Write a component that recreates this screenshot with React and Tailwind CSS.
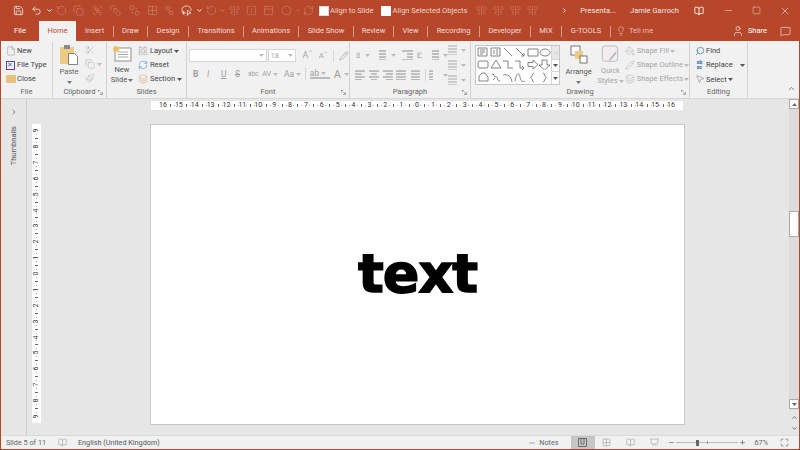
import {
  Save, Undo2, RotateCcw, Copy, Group, Ungroup, BringToFront, SendToBack, LassoSelect, ChevronDown,
  AlignCenterVertical, FlipHorizontal, Lightbulb, User, MessageSquare, Scissors, Paintbrush, File,
  Search, MousePointer2, PaintBucket, Pencil, Layers, ChevronRight, ChevronUp, Minus, Plus, X, Square,
  Maximize, BookOpen, LayoutGrid, PanelTop, Pentagon, RefreshCw, Grid2x2, Presentation,
} from "lucide-react";

const font = "font-['Roboto','Liberation_Sans',sans-serif]";

const tabs = [
  ["Insert", 37], ["Draw", 34], ["Design", 41], ["Transitions", 55], ["Animations", 55],
  ["Slide Show", 55], ["Review", 40], ["View", 34], ["Recording", 52], ["Developer", 51],
  ["MIX", 31], ["G-TOOLS", 49],
];

const shapes = [
  "M1 1h9v8H1z M3 3h5 M3 5h5 M3 7h3", "M1 1h9v8H1z M7 2v6 M3 4h2 M3 6h2", "M2 1l8 8", "M2 1l8 8 M10 6v3H7", "M1 2h10v7H1z", "M1 5.5a5 3.5 0 1 0 10 0a5 3.5 0 1 0-10 0",
  "M2 2h8l1 1v5l-1 1H2L1 8V3z", "M6 1l5 8H1z", "M1 2h5v7h5", "M1 2h5v7h3 M8 7l2 2-2 2", "M1 3.5h5V1l5 4.5-5 4.5V7.5H1z", "M3 1h5v5h3l-5.500 5L0 6h3z",
  "M2 9V4l3-3h3l3 4v4z", "M2 2c3 0 1 3 4 3s0 4 4 4 M3 8l2-2", "M1 3c5-1 8 1 9 7", "M1 9c2-9 4-9 5-4s3 5 5 4", "M7 1C5 1 5.500 5 3.500 5.500C5.500 6 5 10 7 10", "M4 1c2 0 1.500 4 3.500 4.500C5.500 6 6 10 4 10",
];

// three grey bars, used by every paragraph button
function Lines({ w = [10, 7, 10, 7], x = [0, 0, 0, 0], c = "#8c8c8c" }) {
  return (
    <svg width="11" height="10" viewBox="0 0 11 10">
      {w.map((len, i) => (
        <rect key={i} x={x[i]} y={i * 3 + 0.5} width={len} height="1" fill={c} />
      ))}
    </svg>
  );
}

function Caret({ c = "#777" }) {
  return (
    <svg width="5" height="3" viewBox="0 0 5 3" className="shrink-0">
      <path d="M0 0h5L2.500 3z" fill={c} />
    </svg>
  );
}

function Group_({ label, width, launcher, children }) {
  return (
    <div className={`flex h-full shrink-0 flex-col border-r border-[#d2d2d2] ${width}`}>
      <div className="flex h-[45px] min-h-0">{children}</div>
      <div className="relative flex h-[12px] items-center justify-center text-[7.500px] leading-none text-[#666]">
        {label}
        {launcher && (
          <svg width="5" height="5" viewBox="0 0 5 5" className="absolute right-[3px] top-[4px]">
            <path d="M0 .5h2M.5 0v2M4.500 2v2.500H2M2 2l2 2" stroke="#888" fill="none" strokeWidth=".7" />
          </svg>
        )}
      </div>
    </div>
  );
}

function Row({ icon, label, caret, muted, cls = "" }) {
  return (
    <div className={`flex h-[14.5px] items-center whitespace-nowrap text-[7.500px] leading-none ${muted ? "text-[#a6a6a6]" : "text-[#444]"} ${cls}`}>
      <span className="flex w-[11px] justify-center">{icon}</span>
      {label}
      {caret && <Caret c={muted ? "#bbb" : "#555"} />}
    </div>
  );
}

function Ruler({ vertical }) {
  const cells = [];
  const max = vertical ? 9 : 16;
  for (let n = -max; n <= max; n++) {
    const num = Math.abs(n);
    cells.push(
      <span key={n} className={`flex items-center justify-center overflow-visible whitespace-nowrap text-[7px] leading-none text-[#333] ${vertical ? "h-[3.975px] w-full" : "h-full w-[3.975px]"}`}>
        <span className={vertical ? "-rotate-90" : ""}>{num}</span>
      </span>
    );
    if (n === max) break;
    ["dot", "bar", "dot"].forEach((kind, i) => {
      cells.push(
        <span key={n + "-" + i} className={`flex items-center justify-center ${vertical ? "h-[3.975px] w-full" : "h-full w-[3.975px]"}`}>
          {kind === "dot" ? (
            <span className="h-[1px] w-[1px] bg-[#aaa]" />
          ) : (
            <span className={`bg-[#666] ${vertical ? "h-[1px] w-[3px]" : "h-[3px] w-[1px]"}`} />
          )}
        </span>
      );
    });
  }
  return (
    <div className={`flex items-center justify-center bg-white ${vertical ? "h-[299px] w-[9px] flex-col" : "h-[9px] w-[532px]"}`}>
      {cells}
    </div>
  );
}

export default function App() {
  const fade = "#cf7f67";
  const titleIcons = [
    [Save, 18, "#fff"], [Undo2, 18, "#fff"], [ChevronDown, 8, "#fff"], [RotateCcw, 16, fade], [Copy, 19, fade],
    [Group, 18, fade], [BringToFront, 19, fade], [SendToBack, 18, fade], [Grid2x2, 18, fade], [Ungroup, 17, fade],
    [LassoSelect, 17, "#fff"], [ChevronDown, 9, "#fff"], [RotateCcw, 14, fade], [ChevronDown, 8, fade],
    [AlignCenterVertical, 17, fade], [FlipHorizontal, 17, fade], [PanelTop, 17, fade], [Pentagon, 18, fade],
    [ChevronDown, 6, fade], [RefreshCw, 15, fade],
  ];

  return (
    <div className={`flex h-[450px] w-[800px] flex-col overflow-hidden border-x border-b border-[#b7472a] bg-[#e6e6e6] ${font}`}>
      {/* TITLE BAR */}
      <div className="flex h-[21px] shrink-0 items-center whitespace-nowrap bg-[#b7472a] pl-[8px] pr-[8px] text-[7.500px] text-white">
        {titleIcons.map(([Icon, w, color], i) => (
          <span key={i} className="flex shrink-0 justify-center" style={{ width: w }}>
            <Icon size={w < 10 ? 7 : 11} color={color} strokeWidth={w < 10 ? 3 : 1.500} />
          </span>
        ))}
        <span className="ml-[3px] h-[10px] w-[10px] shrink-0 border border-[#ddd] bg-white" />
        <span className="ml-[1px] text-[#f0d5cb]">Align to Slide</span>
        <span className="ml-[7px] h-[10px] w-[10px] shrink-0 bg-white" />
        <span className="ml-[2px] text-[#f0d5cb]">Align Selected Objects</span>
        <span className="ml-[9px] flex gap-[6px]">
          {[0, 1, 2, 3].map((i) => (
            <AlignCenterVertical key={i} size={11} color={fade} strokeWidth={1.500} />
          ))}
        </span>
        <span className="ml-auto flex items-center">
          <ChevronRight size={7} color="#fff" strokeWidth={3} />
          <span className="ml-[12px] text-[#f6e6e0]">Presenta...</span>
          <span className="ml-[14px] text-[#f6e6e0]">Jamie Garroch</span>
          <BookOpen size={10} color="#fff" className="ml-[15px]" />
          <Minus size={11} color="#fff" strokeWidth={1} className="ml-[19px]" />
          <Square size={9} color="#fff" strokeWidth={1} className="ml-[18px]" />
          <X size={12} color="#fff" strokeWidth={1} className="ml-[18px]" />
        </span>
      </div>

      {/* TABS */}
      <div className="flex h-[20px] shrink-0 items-center whitespace-nowrap bg-[#b7472a] pr-[8px] text-[7.500px] leading-none text-[#f3ddd5]">
        <span className="w-[38px] shrink-0 text-center text-white">File</span>
        <span className="flex h-full w-[37px] shrink-0 items-center justify-center bg-[#f1f1f1] text-[#c0492c]">Home</span>
        {tabs.map(([name, w], i) => (
          <span key={name} className={`flex h-[11px] shrink-0 items-center justify-center ${i === 0 ? "" : "border-l border-[#d99a86]"}`} style={{ width: w }}>
            {name}
          </span>
        ))}
        <span className="flex h-[11px] items-center gap-[3px] border-l border-[#d99a86] pl-[5px] text-[#e9bfb1]">
          <Lightbulb size={10} strokeWidth={1.200} color="#f3ddd5" />
          Tell me
        </span>
        <span className="ml-auto flex items-center gap-[4px] text-white">
          <User size={12} strokeWidth={1.200} />
          Share
        </span>
        <MessageSquare size={11} color="#fff" strokeWidth={1.200} className="ml-[13px]" />
      </div>

      {/* RIBBON */}
      <div className="flex h-[58px] shrink-0 border-b border-[#d6d6d6] bg-[#f1f1f1] pt-[1px]">
        <Group_ label="File" width="w-[52px]">
          <div className="flex flex-col pl-[4px] pt-[2px]">
            <Row icon={<File size={10} color="#777" strokeWidth={1} />} label="New" cls="gap-[1px]" />
            <Row icon={<span className="block h-[9px] w-[9px] border border-[#6b3fa0] text-[7px] leading-[7px] text-[#2b7cd3]">✕</span>} label="File Type" cls="gap-[1px]" />
            <Row icon={<span className="block h-[8px] w-[10px] rounded-[1px] bg-[#e8c27a]" />} label="Close" cls="gap-[1px]" />
          </div>
        </Group_>

        <Group_ label="Clipboard" width="w-[54px]" launcher>
          <div className="flex w-[32px] flex-col items-center pt-[3px] text-[7.500px] leading-none text-[#666]">
            <svg width="20" height="20" viewBox="0 0 20 20">
              <rect x="1" y="2" width="14" height="17" fill="#eecb85" />
              <rect x="5" y="0" width="6" height="4" fill="#8a8a8a" />
              <path d="M9.500 8.500h6l3 3v8h-9z" fill="#fff" stroke="#666" strokeWidth=".8" />
            </svg>
            <span className="mt-[3px]">Paste</span>
            <span className="mt-[5px]"><Caret /></span>
          </div>
          <div className="flex flex-col gap-[4px] pt-[3px]">
            <Scissors size={10} color="#aaa" strokeWidth={1.200} />
            <span className="flex items-center gap-[2px]"><Copy size={10} color="#aaa" strokeWidth={1.200} /><Caret c="#bbb" /></span>
            <Paintbrush size={10} color="#aaa" strokeWidth={1.200} />
          </div>
        </Group_>

        <Group_ label="Slides" width="w-[80px]">
          <div className="flex w-[30px] flex-col items-center pt-[3px] text-[7.500px] leading-[10px] text-[#555]">
            <svg width="20" height="17" viewBox="0 0 20 17">
              <rect x="3" y="3" width="16" height="13" fill="#fff" stroke="#777" strokeWidth=".8" />
              <path d="M6 7h10M6 9.500h10M6 12h10" stroke="#aaa" />
              <circle cx="4" cy="4" r="3" fill="#f0c060" />
            </svg>
            <span className="mt-[3px]">New</span>
            <span className="flex items-center gap-[1px]">Slide<Caret /></span>
          </div>
          <div className="flex flex-col pt-[2px]">
            <Row icon={<LayoutGrid size={10} color="#888" strokeWidth={1} />} label="Layout" caret cls="gap-[2px]" />
            <Row icon={<RefreshCw size={10} color="#2b7cd3" strokeWidth={1.200} />} label="Reset" cls="gap-[2px]" />
            <Row icon={<Layers size={10} color="#c98a3c" strokeWidth={1} />} label="Section" caret cls="gap-[2px]" />
          </div>
        </Group_>

        <Group_ label="Font" width="w-[163px]" launcher>
          <div className="flex w-full flex-col pl-[2px] pt-[7px]">
            <div className="flex h-[13px] items-center">
              <span className="flex h-[13px] w-[81px] items-center justify-end border border-[#d5d5d5] bg-white pr-[2px]"><Caret c="#bbb" /></span>
              <span className="ml-[1px] flex h-[13px] w-[29px] items-center justify-between border border-[#d5d5d5] bg-white px-[2px] text-[7.500px] text-[#a6a6a6]">18<Caret c="#bbb" /></span>
              <span className="ml-[7px] text-[9px] text-[#a6a6a6]">Aˆ</span>
              <span className="ml-[6px] text-[8px] text-[#a6a6a6]">Aˇ</span>
              <span className="ml-[6px] h-[12px] border-l border-[#d5d5d5]" />
              <Pencil size={10} color="#aaa" className="ml-[5px]" />
            </div>
            <div className="mt-[6px] flex items-center text-[8.500px] leading-none text-[#a0a0a0]">
              <span className="ml-[4px] w-[14px] font-bold">B</span>
              <span className="w-[14px] italic">I</span>
              <span className="w-[14px] underline">U</span>
              <span className="w-[13px] line-through">S</span>
              <span className="w-[14px] text-[6.500px]">abc</span>
              <span className="flex w-[22px] items-center gap-[2px] text-[7.500px]">AV<Caret c="#bbb" /></span>
              <span className="flex w-[21px] items-center gap-[2px]">Aa<Caret c="#bbb" /></span>
              <span className="h-[12px] border-l border-[#d5d5d5]" />
              <span className="ml-[4px] flex w-[20px] items-center gap-[2px] border-b-2 border-[#bbb] leading-[8px]">ab<Caret c="#bbb" /></span>
              <span className="ml-[4px] flex items-center gap-[3px] text-[11px]">A<Caret c="#bbb" /></span>
            </div>
          </div>
        </Group_>

        <Group_ label="Paragraph" width="w-[121px]" launcher>
          <div className="flex w-[98px] flex-col pl-[5px] pt-[7px]">
            <div className="flex h-[12px] items-center gap-[4px]">
              <Lines w={[7, 7, 7, 7]} x={[3, 3, 3, 3]} /><Caret c="#bbb" />
              <span className="ml-[2px]"><Lines w={[7, 7, 7, 7]} x={[3, 3, 3, 3]} /></span><Caret c="#bbb" />
              <span className="ml-[2px]"><Lines w={[11, 6, 6, 11]} x={[0, 5, 5, 0]} /></span>
              <Lines w={[11, 6, 6, 11]} x={[0, 0, 0, 0]} />
              <span className="ml-[2px]"><Lines w={[7, 7, 7, 7]} x={[4, 4, 4, 4]} /></span><Caret c="#bbb" />
            </div>
            <div className="mt-[8px] flex h-[12px] items-center gap-[3px]">
              <Lines w={[10, 7, 10, 7]} />
              <Lines w={[10, 6, 10, 6]} x={[0, 2, 0, 2]} />
              <Lines w={[10, 7, 10, 7]} x={[0, 3, 0, 3]} />
              <Lines w={[10, 10, 10, 10]} />
              <Lines w={[9, 9, 9, 9]} x={[1, 1, 1, 1]} />
              <span className="ml-[1px] h-[12px] border-l border-[#d5d5d5]" />
              <Lines w={[4, 4, 4, 4]} /><Caret c="#bbb" />
            </div>
          </div>
          <div className="flex flex-col gap-[5px] pt-[3px]">
            {[0, 1, 2].map((i) => (
              <span key={i} className="flex items-center gap-[2px]"><Lines w={[9, 9, 9, 9]} c="#aaa" /><Caret c="#bbb" /></span>
            ))}
          </div>
        </Group_>

        <Group_ label="Drawing" width="w-[219px]" launcher>
          <div className="ml-[4px] mt-[3px] flex h-[40px] w-[85px] border border-[#c6c6c6] bg-white">
            <div className="grid h-full w-[76px] grid-cols-6 grid-rows-3 place-items-center pl-[1px]">
              {shapes.map((d, i) => (
                <svg key={i} width="12" height="11" viewBox="0 0 12 11">
                  <path d={d} fill="none" stroke="#666" strokeWidth=".8" />
                </svg>
              ))}
            </div>
            <div className="flex w-[8px] flex-col border-l border-[#d5d5d5] text-center">
              <span className="flex h-[13px] items-center justify-center bg-[#e8e8e8]"><ChevronUp size={6} color="#aaa" /></span>
              <span className="flex h-[13px] items-center justify-center border-y border-[#d5d5d5]"><Caret c="#555" /></span>
              <span className="flex h-[12px] items-center justify-center"><Caret c="#555" /></span>
            </div>
          </div>
          <div className="flex w-[42px] flex-col items-center pt-[3px] text-[7.500px] leading-[10px] text-[#555]">
            <svg width="18" height="20" viewBox="0 0 18 20">
              <rect x="1" y="1" width="9" height="9" fill="#fff" stroke="#555" strokeWidth=".8" />
              <rect x="5" y="6" width="8" height="8" fill="#eecb85" />
              <rect x="10" y="11" width="7" height="7" fill="#fff" stroke="#555" strokeWidth=".8" />
            </svg>
            <span className="mt-[2px]">Arrange</span>
            <span className="mt-[4px]"><Caret /></span>
          </div>
          <div className="flex w-[30px] flex-col items-center pt-[3px] text-[7.500px] leading-[10px] text-[#a6a6a6]">
            <svg width="19" height="20" viewBox="0 0 19 20">
              <rect x="1" y="1" width="16" height="16" rx="3" fill="#f3edf1" stroke="#bbb" />
              <path d="M16 8l-6 7-2 2 1-3 6-7z" fill="#aaa" />
            </svg>
            <span className="mt-[2px]">Quick</span>
            <span className="flex items-center gap-[1px]">Styles<Caret c="#bbb" /></span>
          </div>
          <div className="flex flex-col pl-[1px] pt-[2px]">
            <Row icon={<PaintBucket size={10} color="#aaa" strokeWidth={1.200} />} label="Shape Fill" caret muted cls="gap-[1px]" />
            <Row icon={<Pencil size={10} color="#aaa" strokeWidth={1.200} />} label="Shape Outline" caret muted cls="gap-[1px]" />
            <Row icon={<Layers size={10} color="#aaa" strokeWidth={1.200} />} label="Shape Effects" caret muted cls="gap-[1px]" />
          </div>
        </Group_>

        <Group_ label="Editing" width="w-[58px]">
          <div className="flex flex-col pl-[4px] pt-[2px]">
            <Row icon={<Search size={10} color="#2b6cb0" strokeWidth={1.500} className="-scale-x-100" />} label="Find" cls="gap-[1px]" />
            <div className="flex items-center">
              <Row icon={<span className="text-[5px] font-bold leading-[5px] text-[#2b6cb0]">ab<br />ac</span>} label="Replace" cls="gap-[1px]" />
              <span className="ml-[7px]"><Caret c="#555" /></span>
            </div>
            <Row icon={<MousePointer2 size={10} color="#777" strokeWidth={1.200} />} label="Select" caret cls="gap-[1px]" />
          </div>
        </Group_>
        <div className="flex flex-1 items-end justify-end pb-[5px] pr-[3px]">
          <ChevronUp size={9} color="#555" strokeWidth={2} />
        </div>
      </div>

      {/* WORK AREA */}
      <div className="flex min-h-0 flex-1">
        <div className="flex w-[26px] shrink-0 flex-col items-center border-r border-[#cfcfcf] pt-[9px]">
          <ChevronRight size={8} color="#555" strokeWidth={2} />
          <span className="mt-[10px] rotate-180 text-[7.500px] leading-none text-[#555] [writing-mode:vertical-rl]">Thumbnails</span>
        </div>
        <div className="flex min-w-0 flex-1 flex-col pt-[2px]">
          <div className="ml-[124px]">
            <Ruler />
          </div>
          <div className="mt-[14px] flex">
            <div className="ml-[5px]">
              <Ruler vertical />
            </div>
            <div className="ml-[109px] flex h-[301px] w-[535px] items-center justify-center border border-[#c8c8c8] bg-white pb-[2px]">
              <span className="font-['DejaVu_Sans',sans-serif] text-[54px] leading-none font-bold tracking-[-1px] text-black [-webkit-text-stroke:1.500px_black]">text</span>
            </div>
          </div>
        </div>
        <div className="flex w-[10px] shrink-0 flex-col bg-[#dcdcdc]">
          <span className="flex h-[10px] items-center justify-center border border-[#aaa] bg-white"><span className="rotate-180"><Caret c="#666" /></span></span>
          <span className="mt-[102px] h-[26px] border border-[#aaa] bg-white" />
          <span className="mt-auto flex h-[10px] items-center justify-center border border-[#aaa] bg-white"><Caret c="#666" /></span>
          <span className="mt-[1px] flex h-[25px] flex-col items-center justify-center gap-[4px] bg-[#e6e6e6]">
            <ChevronUp size={7} color="#666" strokeWidth={3} />
            <ChevronDown size={7} color="#666" strokeWidth={3} />
          </span>
        </div>
      </div>

      {/* STATUS BAR */}
      <div className="flex h-[14px] shrink-0 items-center border-t border-[#dadada] bg-[#f1f1f1] pr-[10px] text-[7.250px] leading-none text-[#666]">
        <span className="ml-[5px] w-[52px]">Slide 5 of 11</span>
        <BookOpen size={9} color="#777" strokeWidth={1} />
        <span className="ml-[11px] text-[#555]">English (United Kingdom)</span>
        <span className="ml-auto flex items-center gap-[3px]"><Minus size={8} color="#777" />Notes</span>
        <span className="ml-[12px] flex h-full w-[24px] items-center justify-center bg-[#c6c6c6]">
          <svg width="9" height="9" viewBox="0 0 9 9"><path d="M.5.5h8v8h-8zM3 .5v5.500h3V.500" fill="none" stroke="#555" strokeWidth=".8" /></svg>
        </span>
        <span className="flex w-[24px] justify-center"><Grid2x2 size={9} color="#777" strokeWidth={1} /></span>
        <span className="flex w-[24px] justify-center"><BookOpen size={9} color="#777" strokeWidth={1} /></span>
        <span className="flex w-[24px] justify-center"><Presentation size={9} color="#777" strokeWidth={1} /></span>
        <Minus size={7} color="#555" strokeWidth={2} className="ml-[1px]" />
        <span className="relative ml-[1px] flex h-[1px] w-[62px] items-center bg-[#bbb]">
          <span className="absolute left-[20px] h-[6px] w-[3px] bg-[#666]" />
          <span className="absolute left-[31px] h-[3px] w-[1px] bg-[#999]" />
        </span>
        <Plus size={7} color="#555" strokeWidth={2} className="ml-[1px]" />
        <span className="ml-[9px]">67%</span>
        <Maximize size={9} color="#777" className="ml-[12px]" />
      </div>
    </div>
  );
}
